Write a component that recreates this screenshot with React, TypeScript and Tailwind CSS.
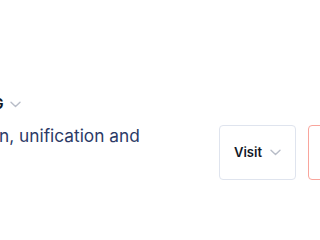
function Chevron() {
  return (
    <svg width="11" height="7" viewBox="0 0 11 7" fill="none" className="shrink-0">
      <path d="M1 1.25 L5.5 5.5 L10 1.25" stroke="#b8bdc8" strokeWidth="1.4" strokeLinecap="round" strokeLinejoin="round" />
    </svg>
  );
}

export default function App() {
  return (
    <div className="relative h-[214px] w-[320px] overflow-hidden bg-white font-['Inter',sans-serif]">
      <div className="flex items-start pt-[94px]">
        <div className="w-[219px] shrink-0">
          <div className="-ml-[7px] flex h-5 items-center gap-[6px]">
            <span className="text-[14px] font-bold leading-5 text-[#111827]">G</span>
            <Chevron />
          </div>
          <p className="mt-2 -ml-px whitespace-nowrap text-[17.3px] leading-7 text-[#2c3a66]">
            n, unification and
          </p>
        </div>
        <div className="mt-[31px] flex shrink-0 gap-3">
          <button className="flex h-[55px] w-[77px] items-center justify-center gap-2 rounded-[4px] border border-[#dfe4ee] bg-white">
            <span className="text-[13px] font-semibold text-[#111827]">Visit</span>
            <Chevron />
          </button>
          <button className="h-[55px] w-[77px] rounded-[4px] border border-[#f9a59c] bg-white" />
        </div>
      </div>
    </div>
  );
}
